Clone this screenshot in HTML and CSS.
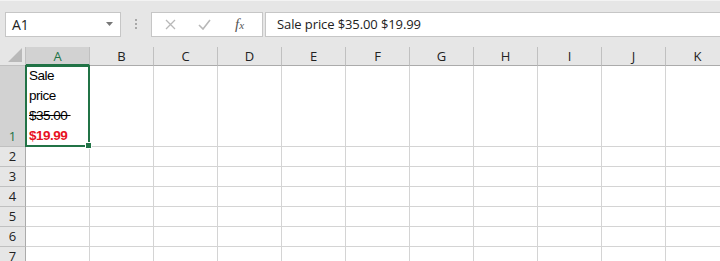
FILE: index.html
```html
<!DOCTYPE html>
<html lang="en">
<head>
    <meta charset="UTF-8">
    <title>Sheet</title>
    <link rel="stylesheet" href="styles.css">
</head>
<body>

    <div class="toolbar">
        <div class="name-box">
            <span>A1</span>
            <svg class="caret" width="7" height="4" viewBox="0 0 7 4"><path d="M0 0h7L3.5 4z" fill="#777"/></svg>
        </div>
        <div class="grip"><i></i><i></i><i></i></div>
        <div class="fx-box">
            <svg width="11" height="11" viewBox="0 0 11 11"><path d="M1 1l9 9M10 1l-9 9" stroke="#b8b8b8" stroke-width="1.3" fill="none"/></svg>
            <svg width="13" height="11" viewBox="0 0 13 11"><path d="M1 6l4 4 7-9" stroke="#b8b8b8" stroke-width="1.6" fill="none"/></svg>
            <span class="fx">f<sub>x</sub></span>
        </div>
        <div class="formula">Sale price $35.00 $19.99</div>
    </div>

    <div class="sheet">
        <div class="corner"><svg width="14" height="14" viewBox="0 0 14 14"><path d="M14 0v14H0z" fill="#b9b9b9"/></svg></div>
        <div class="col-head active">A</div>
        <div class="col-head">B</div>
        <div class="col-head">C</div>
        <div class="col-head">D</div>
        <div class="col-head">E</div>
        <div class="col-head">F</div>
        <div class="col-head">G</div>
        <div class="col-head">H</div>
        <div class="col-head">I</div>
        <div class="col-head">J</div>
        <div class="col-head">K</div>

        <!-- row 1, wrapped text -->
        <div class="row-head active">1</div>
        <div class="cell selected">
            <div>Sale</div>
            <div>price</div>
            <div class="old">$35.00 </div>
            <div class="new">$19.99</div>
        </div>
        <div class="cell"></div><div class="cell"></div><div class="cell"></div><div class="cell"></div><div class="cell"></div>
        <div class="cell"></div><div class="cell"></div><div class="cell"></div><div class="cell"></div><div class="cell"></div>

        <div class="row-head">2</div>
        <div class="cell"></div><div class="cell"></div><div class="cell"></div><div class="cell"></div><div class="cell"></div><div class="cell"></div>
        <div class="cell"></div><div class="cell"></div><div class="cell"></div><div class="cell"></div><div class="cell"></div>
        <div class="row-head">3</div>
        <div class="cell"></div><div class="cell"></div><div class="cell"></div><div class="cell"></div><div class="cell"></div><div class="cell"></div>
        <div class="cell"></div><div class="cell"></div><div class="cell"></div><div class="cell"></div><div class="cell"></div>
        <div class="row-head">4</div>
        <div class="cell"></div><div class="cell"></div><div class="cell"></div><div class="cell"></div><div class="cell"></div><div class="cell"></div>
        <div class="cell"></div><div class="cell"></div><div class="cell"></div><div class="cell"></div><div class="cell"></div>
        <div class="row-head">5</div>
        <div class="cell"></div><div class="cell"></div><div class="cell"></div><div class="cell"></div><div class="cell"></div><div class="cell"></div>
        <div class="cell"></div><div class="cell"></div><div class="cell"></div><div class="cell"></div><div class="cell"></div>
        <div class="row-head">6</div>
        <div class="cell"></div><div class="cell"></div><div class="cell"></div><div class="cell"></div><div class="cell"></div><div class="cell"></div>
        <div class="cell"></div><div class="cell"></div><div class="cell"></div><div class="cell"></div><div class="cell"></div>
        <div class="row-head">7</div>
        <div class="cell"></div><div class="cell"></div><div class="cell"></div><div class="cell"></div><div class="cell"></div><div class="cell"></div>
        <div class="cell"></div><div class="cell"></div><div class="cell"></div><div class="cell"></div><div class="cell"></div>
    </div>

</body>
</html>
```

FILE: styles.css
```css
body {
    margin: 0;
    padding: 0;
    background-color: #ffffff;
    font-family: "Open Sans", "Noto Sans", sans-serif;
    overflow: hidden;
}
.toolbar {
    display: flex;
    align-items: center;
    height: 47px;
    box-sizing: border-box;
    padding: 0 0 0 5px;
    background-color: #e6e6e6;
    border-top: 1px solid #f3f3f3;
}
.name-box {
    display: flex;
    align-items: center;
    justify-content: space-between;
    width: 116px;
    height: 25px;
    box-sizing: border-box;
    padding: 0 7px 0 6px;
    background-color: white;
    border: 1px solid #c6c6c6;
    font-size: 14px;
    color: #222;
}
.grip {
    display: flex;
    flex-direction: column;
    gap: 2px;
    margin: 0 14px 0 14px;
}
.grip i {
    display: block;
    width: 2px;
    height: 2px;
    background-color: #a8a8a8;
}
.fx-box {
    display: flex;
    align-items: center;
    width: 112px;
    height: 25px;
    box-sizing: border-box;
    padding: 0 0 0 13px;
    gap: 22px;
    background-color: white;
    border: 1px solid #c6c6c6;
}
.fx {
    font-family: "Liberation Serif", serif;
    font-style: italic;
    font-size: 15px;
    color: #555;
    margin-left: 2px;
}
.fx sub {
    font-size: 11px;
    vertical-align: 0;
}
.formula {
    flex: 1;
    height: 25px;
    box-sizing: border-box;
    margin-left: 2px;
    padding: 2px 0 0 11px;
    background-color: white;
    border: 1px solid #c6c6c6;
    border-right: none;
    font-size: 13px;
    letter-spacing: -0.1px;
    color: #222;
}
.sheet {
    display: grid;
    grid-template-columns: 26px repeat(11, 64px);
    grid-template-rows: 19px 81px repeat(6, 20px);
}
.corner {
    display: flex;
    align-items: flex-end;
    justify-content: flex-end;
    padding: 0 3px 3px 0;
    background-color: #e6e6e6;
    border-right: 1px solid #c0c0c0;
    border-bottom: 1px solid #c0c0c0;
    box-sizing: border-box;
}
.col-head, .row-head {
    display: flex;
    align-items: center;
    justify-content: center;
    box-sizing: border-box;
    background-color: #e6e6e6;
    border-right: 1px solid #c0c0c0;
    border-bottom: 1px solid #ababab;
    font-size: 13px;
    color: #222;
}
.row-head {
    align-items: flex-end;
    padding-bottom: 1px;
    border-bottom: 1px solid #c0c0c0;
    border-right: 1px solid #ababab;
}
.col-head.active, .row-head.active {
    background-color: #d2d2d2;
    color: #217346;
}
.col-head.active {
    border-bottom: 2px solid #217346;
}
.cell {
    box-sizing: border-box;
    border-right: 1px solid #d4d4d4;
    border-bottom: 1px solid #d4d4d4;
}
.cell.selected {
    position: relative;
    display: flex;
    flex-direction: column;
    justify-content: flex-end;
    padding: 0 0 0 3px;
    font-family: "Liberation Sans", sans-serif;
    font-size: 13.5px;
    letter-spacing: -0.5px;
    line-height: 20px;
    color: #000;
}
.cell.selected::after {
    content: "";
    position: absolute;
    top: -1px;
    left: -1px;
    right: -1px;
    bottom: -1px;
    border: 2px solid #217346;
}
.cell.selected::before {
    content: "";
    position: absolute;
    right: -3px;
    bottom: -3px;
    width: 5px;
    height: 5px;
    background-color: #217346;
    border: 1px solid white;
    z-index: 2;
}
.old {
    text-decoration: line-through;
    white-space: pre;
}
.new {
    color: #e81123;
    font-weight: bold;
}
```
